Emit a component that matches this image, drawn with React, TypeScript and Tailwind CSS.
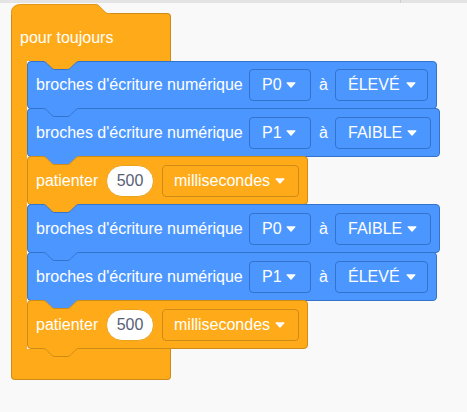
import React from "react";

const ORANGE = "#ffab19";
const ORANGE_B = "#cf8b17";
const BLUE = "#4c97ff";
const BLUE_B = "#3373cc";

function Arrow() {
  return (
    <svg width="10" height="6" viewBox="0 0 10 6" className="shrink-0">
      <path d="M1.2 0.9 L5 5.1 L8.8 0.9 Z" fill="white" stroke="white" strokeWidth="1.4" strokeLinejoin="round" />
    </svg>
  );
}

function Tab({ fill, stroke, pos }: { fill: string; stroke: string; pos: "top" | "bottom" }) {
  return (
    <svg
      width="36"
      height="10"
      viewBox="0 0 36 10"
      className={pos === "top" ? "absolute left-[15px] top-[-1px] z-10 overflow-visible" : "absolute left-[15px] top-full z-10 overflow-visible"}
    >
      <path
        d="M0,0 H36 V0.5 c-2,0 -3,1 -4,2 l-4,4 c-1,1 -2,2 -4,2 h-12 c-2,0 -3,-1 -4,-2 l-4,-4 c-1,-1 -2,-2 -4,-2 Z"
        fill={fill}
      />
      <path
        d="M0,0.5 c2,0 3,1 4,2 l4,4 c1,1 2,2 4,2 h12 c2,0 3,-1 4,-2 l4,-4 c1,-1 2,-2 4,-2"
        fill="none"
        stroke={stroke}
        strokeWidth="1"
      />
    </svg>
  );
}

function BlueDrop({ label, w, pr }: { label: string; w: string; pr: string }) {
  return (
    <div className={`flex h-[32px] items-center justify-between rounded-[4px] border border-[#3373cc] bg-[#4c97ff] pl-[12px] ${w} ${pr}`}>
      <span className="whitespace-nowrap">{label}</span>
      <Arrow />
    </div>
  );
}

function PinBlock({
  pin,
  level,
  levelW,
  levelPr,
  prev,
  first,
}: {
  pin: string;
  level: string;
  levelW: string;
  levelPr: string;
  prev: string;
  first?: boolean;
}) {
  return (
    <div
      className={`relative flex w-fit items-center gap-[8px] rounded-[4px] border border-[#3373cc] bg-[#4c97ff] pl-[8px] pr-[8px] ${
        first ? "h-[48px]" : "-mt-px h-[49px]"
      }`}
    >
      <Tab fill={prev} stroke={BLUE_B} pos="top" />
      <span className="w-[205px] whitespace-nowrap">broches d'écriture numérique</span>
      <BlueDrop label={pin} w="w-[62px]" pr="pr-[14px]" />
      <span className="w-[8px]">à</span>
      <BlueDrop label={level} w={levelW} pr={levelPr} />
    </div>
  );
}

function WaitBlock({ prev, last }: { prev: string; last?: boolean }) {
  return (
    <div className="relative -mt-px flex h-[49px] w-fit items-center gap-[8px] rounded-[4px] border border-[#cf8b17] bg-[#ffab19] pl-[8px] pr-[8px]">
      <Tab fill={prev} stroke={ORANGE_B} pos="top" />
      <span className="w-[62px] whitespace-nowrap">patienter</span>
      <div className="flex h-[32px] w-[48px] items-center justify-center rounded-full border border-[#e9a21c] bg-white text-[#575e75]">
        500
      </div>
      <div className="flex h-[32px] w-[137px] items-center justify-between rounded-[4px] border border-[#cf8b17] bg-[#ffab19] pl-[11px] pr-[13px]">
        <span className="whitespace-nowrap">millisecondes</span>
        <Arrow />
      </div>
      {last && <Tab fill={ORANGE} stroke={ORANGE_B} pos="bottom" />}
    </div>
  );
}

export default function App() {
  return (
    <div
      className="relative h-[412px] w-[467px] overflow-hidden bg-[#f9f9f9] text-[16px] text-white"
      style={{ fontFamily: '"Liberation Sans", Arial, sans-serif' }}
    >
      <div className="flex h-[3px] bg-[#e4e4e4]">
        <div className="w-[400px]" />
        <div className="w-px bg-[#cfcfcf]" />
      </div>

      <div className="ml-[11px] mt-[10px] w-fit">
        {/* top arm */}
        <div className="relative flex h-[48px] w-[160px] items-center rounded-tr-[4px] border-l border-r border-t border-[#cf8b17] bg-[#ffab19] pl-[8px]">
          <svg width="100" height="10" viewBox="0 0 100 10" className="absolute left-[-1px] top-[-10px] overflow-visible">
            <path d="M0,10 L0,9 C0,3 4,0 11,0 L84,0 C86,0 87,0.5 88,1.5 L94,7.5 C95,8.5 96,9 98,9 L100,9 L100,10.5 L0,10.5 Z" fill={ORANGE} />
            <path
              d="M0.5,10 L0.5,9 C0.5,3.5 4.5,0.5 11,0.5 L84,0.5 C86,0.5 87,1 88,2 L94,8 C95,9 96,9.5 98,9.5 L100,9.5"
              fill="none"
              stroke={ORANGE_B}
              strokeOpacity="0.6"
              strokeWidth="1"
            />
          </svg>
          <span className="relative whitespace-nowrap">pour toujours</span>
        </div>

        {/* middle */}
        <div className="flex">
          <div className="w-[16px] shrink-0 border-l border-[#cf8b17] bg-[#ffab19]" />
          <div className="flex flex-col">
            <PinBlock pin="P0" level="ÉLEVÉ" levelW="w-[93px]" levelPr="pr-[11px]" prev={ORANGE} first />
            <PinBlock pin="P1" level="FAIBLE" levelW="w-[96px]" levelPr="pr-[13px]" prev={BLUE} />
            <WaitBlock prev={BLUE} />
            <PinBlock pin="P0" level="FAIBLE" levelW="w-[96px]" levelPr="pr-[13px]" prev={ORANGE} />
            <PinBlock pin="P1" level="ÉLEVÉ" levelW="w-[93px]" levelPr="pr-[11px]" prev={BLUE} />
            <WaitBlock prev={BLUE} last />
          </div>
        </div>

        {/* bottom arm */}
        <div className="h-[31px] w-[160px] rounded-b-[4px] border-b border-l border-r border-[#cf8b17] bg-[#ffab19]" />
      </div>
    </div>
  );
}
